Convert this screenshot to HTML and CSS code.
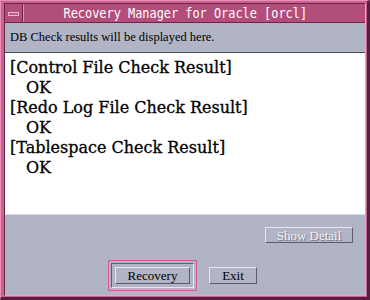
FILE: index.html
```html
<!DOCTYPE html>
<html>
<head>
<meta charset="utf-8">
<link rel="stylesheet" href="styles.css">
</head>
<body>
<div class="win">
  <div class="inner">
    <div class="titlebar">
      <div class="menubtn"><span class="menubar"></span></div>
      <div class="title"><span class="title-text">Recovery Manager for Oracle [orcl]</span></div>
    </div>
    <div class="client">
      <div class="msg">DB Check results will be displayed here.</div>
      <div class="results">
        <div class="line">[Control File Check Result]</div>
        <div class="line ok">OK</div>
        <div class="line">[Redo Log File Check Result]</div>
        <div class="line ok">OK</div>
        <div class="line">[Tablespace Check Result]</div>
        <div class="line ok">OK</div>
      </div>
      <div class="detail-row">
        <div class="btn btn-detail disabled">Show Detail</div>
      </div>
      <div class="action-row">
        <div class="focus">
          <div class="ring">
            <div class="btn btn-recovery">Recovery</div>
          </div>
        </div>
        <div class="btn btn-exit">Exit</div>
      </div>
    </div>
  </div>
</div>
</body>
</html>
```
FILE: styles.css
```css
html, body {
  margin: 0;
  padding: 0;
  background: #c8648e;
}
.win {
  width: 370px;
  height: 300px;
  box-sizing: border-box;
  background: #c8648e;
  border-top: 1px solid #e890b8;
  border-left: 1px solid #e890b8;
  border-right: 3px solid #5c1e3e;
  border-bottom: 3px solid #5c1e3e;
  padding: 2px 1px 1px 3px;
  display: flex;
}
.inner {
  flex: 1;
  display: flex;
  flex-direction: column;
  border-top: 1px solid #6c2446;
  border-left: 1px solid #6c2446;
  border-right: 1px solid #e8a4c4;
  border-bottom: 1px solid #e8a4c4;
  background: #b0b4c4;
}
.titlebar {
  height: 18px;
  border-bottom: 1px solid #6c2446;
  background: #b24e7a;
  display: flex;
}
.menubtn {
  width: 17px;
  border-right: 1px solid #6c2446;
  box-shadow: 1px 0 0 #e090b4;
  display: flex;
  align-items: center;
  justify-content: center;
  position: relative;
  z-index: 1;
}
.menubar {
  width: 9px;
  height: 2px;
  border: 1px solid #f0b4d0;
  background: #c0607e;
  margin-top: 1px;
}
.title {
  flex: 1;
  display: flex;
  align-items: center;
  justify-content: center;
  margin-right: 18px;
  overflow: hidden;
}
.title-text {
  font-family: "DejaVu Sans Mono", monospace;
  font-size: 14px;
  color: #ffffff;
  white-space: nowrap;
  transform: scaleX(0.85);
  display: inline-block;
}
.client {
  flex: 1;
  display: flex;
  flex-direction: column;
}
.msg {
  height: 29px;
  display: flex;
  align-items: center;
  padding-left: 5px;
  font-family: "Liberation Serif", serif;
  font-size: 12.5px;
  color: #000;
}
.results {
  background: #ffffff;
  border-top: 1px solid #4c4c5c;
  border-bottom: 1px solid #d8dce6;
  padding: 5px 0 0 5px;
  height: 156px;
}
.line {
  font-family: "DejaVu Serif", serif;
  font-size: 16px;
  line-height: 20px;
  color: #000;
  white-space: nowrap;
  -webkit-text-stroke: 0.3px #000;
}
.line.ok {
  padding-left: 16px;
}
.btn {
  box-sizing: border-box;
  border-top: 1px solid #e4e8f0;
  border-left: 1px solid #e4e8f0;
  border-right: 1px solid #5c5c6c;
  border-bottom: 1px solid #5c5c6c;
  background: #b0b4c4;
  font-family: "Liberation Serif", serif;
  font-size: 13px;
  color: #000;
  display: flex;
  align-items: center;
  justify-content: center;
  line-height: 1;
}
.detail-row {
  display: flex;
  justify-content: flex-end;
  padding-right: 12px;
  margin-top: 12px;
}
.btn-detail {
  width: 88px;
  height: 16px;
}
.disabled {
  color: #f0f2f6;
  text-shadow: 1px 1px 0 #747890;
}
.action-row {
  display: flex;
  align-items: center;
  margin-top: 17px;
  padding-left: 103px;
  gap: 12px;
}
.focus {
  border: 1px solid #d45c8e;
  padding: 2px;
}
.ring {
  border-top: 1px solid #606070;
  border-left: 1px solid #606070;
  border-right: 1px solid #e4e8f0;
  border-bottom: 1px solid #e4e8f0;
  padding: 3px;
}
.btn-recovery {
  width: 75px;
  height: 17px;
}
.btn-exit {
  width: 48px;
  height: 17px;
}
```
